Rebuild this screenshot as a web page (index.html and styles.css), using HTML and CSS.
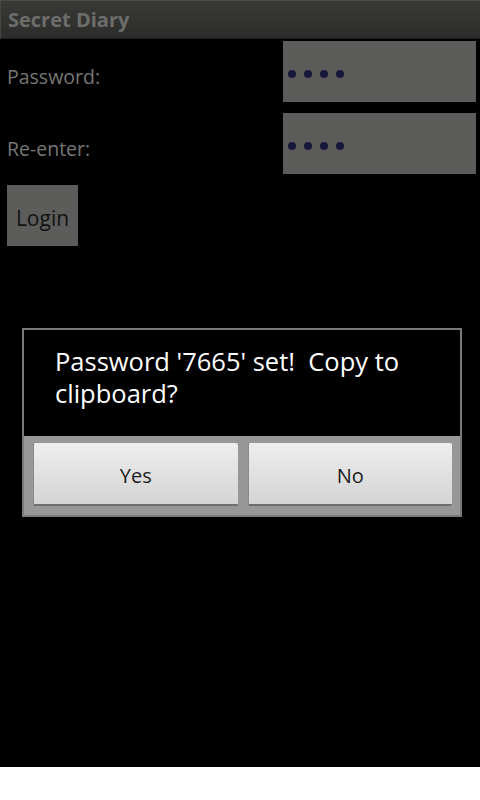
FILE: index.html
```html
<!DOCTYPE html>
<html lang="en">

<head>
    <meta charset="UTF-8">
    <meta name="viewport" content="width=device-width, initial-scale=1.0">
    <title>Secret Diary</title>
    <link rel="stylesheet" href="styles.css">
</head>

<body>
    <div class="screen">
        <div class="title-bar">Secret Diary</div>

        <div class="form">
            <div class="row">
                <label class="label">Password:</label>
                <div class="field">
                    <span class="dot"></span><span class="dot"></span><span class="dot"></span><span class="dot"></span>
                </div>
            </div>
            <div class="row">
                <label class="label">Re-enter:</label>
                <div class="field">
                    <span class="dot"></span><span class="dot"></span><span class="dot"></span><span class="dot"></span>
                </div>
            </div>
            <button class="login">Login</button>
        </div>

        <div class="dialog">
            <div class="dialog-message">Password '7665' set!&nbsp; Copy to clipboard?</div>
            <div class="dialog-buttons">
                <button class="dialog-btn">Yes</button>
                <button class="dialog-btn">No</button>
            </div>
        </div>
    </div>
</body>

</html>
```

FILE: styles.css
```css
body {
    margin: 0;
    background-color: #fff;
    font-family: "Open Sans", "DejaVu Sans", sans-serif;
}

.screen {
    position: relative;
    height: 767px;
    background-color: #000;
    overflow: hidden;
}

.title-bar {
    display: flex;
    align-items: center;
    height: 37px;
    padding-left: 7px;
    border-top: 1px solid #4a4b49;
    border-left: 1px solid #454644;
    border-bottom: 1px solid #1c1c1c;
    background: linear-gradient(#393a38, #2c2d2b);
    color: #6c6d6b;
    font-size: 20px;
    font-weight: bold;
}

.form {
    display: flex;
    flex-direction: column;
    gap: 11px;
    padding: 2px 4px 0 7px;
}

.row {
    display: flex;
    justify-content: space-between;
    height: 61px;
}

.label {
    align-self: center;
    margin-top: 10px;
    font-size: 19.5px;
    color: #767775;
}

.field {
    display: flex;
    align-items: center;
    gap: 8px;
    width: 188px;
    padding: 5px 0 0 5px;
    background-color: #5c5d5b;
}

.dot {
    width: 8px;
    height: 8px;
    border-radius: 50%;
    background-color: #17163b;
}

.login {
    width: 71px;
    height: 61px;
    padding: 4px 0 0;
    border: none;
    background-color: #5c5d5b;
    color: #121212;
    font-family: inherit;
    font-size: 21px;
}

.dialog {
    position: absolute;
    top: 328px;
    left: 22px;
    width: 436px;
    border: 2px solid #7a7a7a;
    background-color: #000;
}

.dialog-message {
    height: 91px;
    padding: 15px 20px 0 31px;
    color: #fff;
    font-size: 25.5px;
    line-height: 32px;
}

.dialog-buttons {
    display: flex;
    gap: 10px;
    padding: 7px 8px 9px 9px;
    background-color: #979797;
}

.dialog-btn {
    flex: 1;
    height: 63px;
    padding: 4px 0 0;
    border: none;
    border-left: 1px solid #8a8a8a;
    border-bottom: 2px solid #6e6e6e;
    border-radius: 2px;
    background: linear-gradient(#eeeeee, #d4d4d4);
    color: #1c1c1c;
    font-family: inherit;
    font-size: 20px;
}
```
